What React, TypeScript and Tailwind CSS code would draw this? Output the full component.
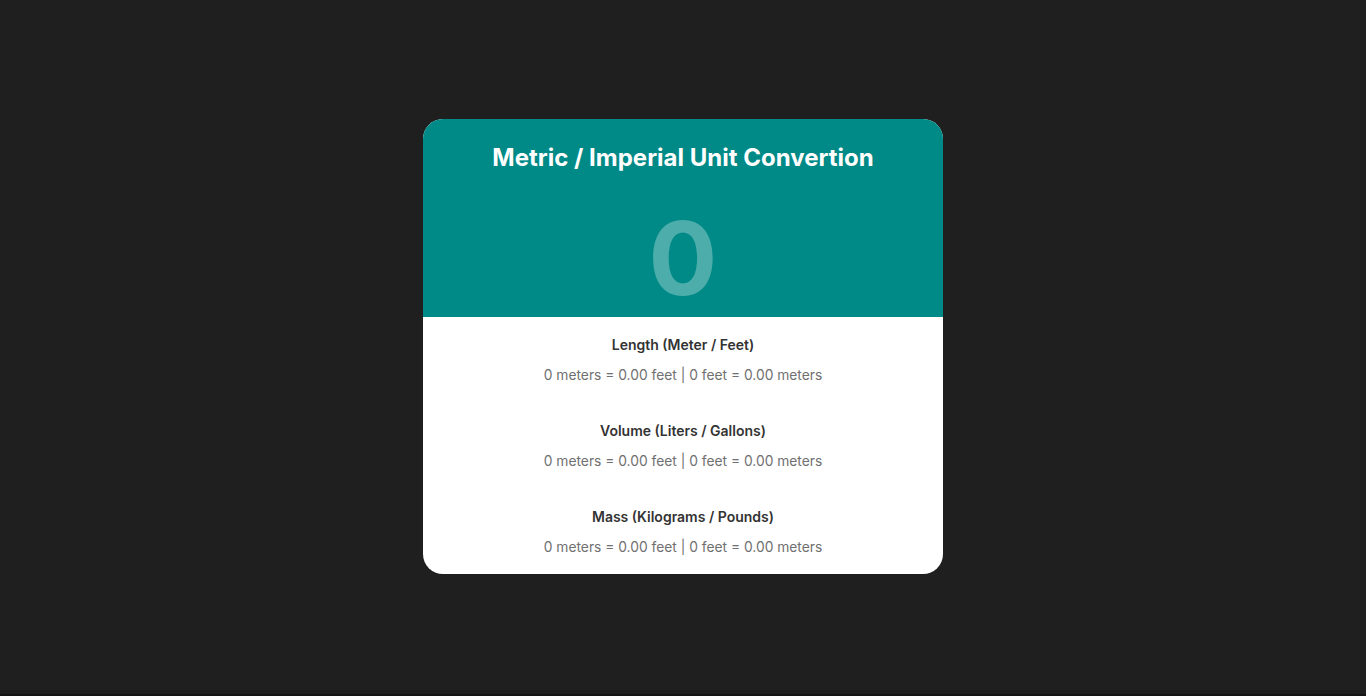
const sections = [
  { title: 'Length (Meter / Feet)', text: '0 meters = 0.00 feet | 0 feet = 0.00 meters' },
  { title: 'Volume (Liters / Gallons)', text: '0 meters = 0.00 feet | 0 feet = 0.00 meters' },
  { title: 'Mass (Kilograms / Pounds)', text: '0 meters = 0.00 feet | 0 feet = 0.00 meters' },
];

export default function App() {
  return (
    <div
      className="h-[696px] w-full bg-[#1f1f1f] flex flex-col items-center pt-[119px] border-b-2 border-[#141414]"
      style={{ fontFamily: 'Inter, "Noto Sans", sans-serif' }}
    >
      <div className="w-[520px] rounded-[20px] overflow-hidden bg-white">
        <div className="bg-[#008a87] h-[198px] flex flex-col items-center">
          <h1 className="text-white font-bold text-[24px] leading-none mt-[27px]">Metric / Imperial Unit Convertion</h1>
          <div className="text-white/30 font-bold text-[102px] leading-none mt-[37px]">0</div>
        </div>
        <div className="flex flex-col items-center pt-[20px] pb-[19px] gap-[40px]">
          {sections.map((s) => (
            <div key={s.title} className="flex flex-col items-center">
              <h2 className="text-[#333] font-semibold text-[14px] leading-[16px]">{s.title}</h2>
              <p className="text-[#707070] text-[13.8px] leading-[16px] mt-[14px]">{s.text}</p>
            </div>
          ))}
        </div>
      </div>
    </div>
  );
}
